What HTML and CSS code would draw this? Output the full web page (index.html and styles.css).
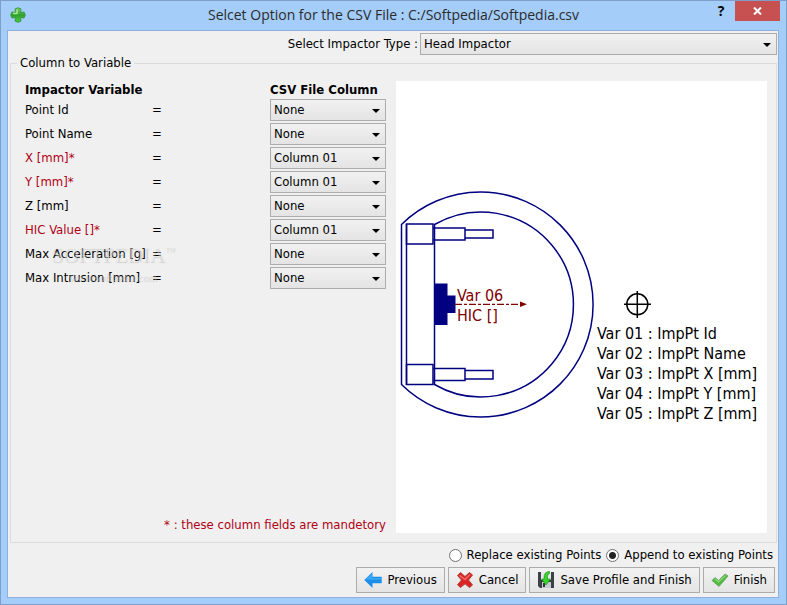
FILE: index.html
```html
<!DOCTYPE html>
<html lang="en">
<head>
<meta charset="utf-8">
<title>Selcet Option for the CSV File</title>
<link rel="stylesheet" href="styles.css">
</head>
<body>
<div class="window">
  <header class="titlebar">
    <svg class="app-icon" width="16" height="16" viewBox="0 0 16 16" aria-hidden="true">
      <defs><linearGradient id="plus" x1="0" y1="0" x2="0" y2="1"><stop offset="0" stop-color="#7fd866"/><stop offset=".5" stop-color="#2f9f2c"/><stop offset="1" stop-color="#4cd03a"/></linearGradient></defs>
      <path d="M5 2Q8 -.5 11 2L10.500 5.500L14 5Q16.500 8 14 11L10.500 10.500L11 14Q8 16.500 5 14L5.500 10.500L2 11Q-.5 8 2 5L5.500 5.500Z" fill="url(#plus)" stroke="#3a9a48"/>
      <path d="M7 2.500V6.500H3" fill="none" stroke="#a8e890" stroke-width="1.500"/>
    </svg>
    <h1 class="title">Selcet Option for the CSV File : C:/Softpedia/Softpedia.csv</h1>
    <button class="help" type="button">?</button>
    <button class="close" type="button" aria-label="Close">
      <svg width="9" height="8" viewBox="0 0 9 8"><path d="M1 .5l7 7M8 .5l-7 7" stroke="#fff" stroke-width="2"/></svg>
    </button>
  </header>

  <form class="client">
    <div class="type-row">
      <label for="type">Select Impactor Type :</label>
      <select id="type" class="combo type-combo"><option>Head Impactor</option></select>
    </div>

    <fieldset class="group">
      <legend>Column to Variable</legend>
      <div class="group-body">
        <div class="mapping">
          <table class="map-table">
            <thead><tr><th class="name">Impactor Variable</th><th></th><th class="column">CSV File Column</th></tr></thead>
            <tbody>
              <tr><td><label for="v1">Point Id</label></td><td>=</td><td><select id="v1" class="combo"><option>None</option></select></td></tr>
              <tr><td><label for="v2">Point Name</label></td><td>=</td><td><select id="v2" class="combo"><option>None</option></select></td></tr>
              <tr><td><label class="required" for="v3">X [mm]*</label></td><td>=</td><td><select id="v3" class="combo"><option>Column 01</option></select></td></tr>
              <tr><td><label class="required" for="v4">Y [mm]*</label></td><td>=</td><td><select id="v4" class="combo"><option>Column 01</option></select></td></tr>
              <tr><td><label for="v5">Z [mm]</label></td><td>=</td><td><select id="v5" class="combo"><option>None</option></select></td></tr>
              <tr><td><label class="required" for="v6">HIC Value []*</label></td><td>=</td><td><select id="v6" class="combo"><option>Column 01</option></select></td></tr>
              <tr><td><label for="v7">Max Acceleration [g]</label></td><td>=</td><td><select id="v7" class="combo"><option>None</option></select></td></tr>
              <tr><td><label for="v8">Max Intrusion [mm]</label></td><td>=</td><td><select id="v8" class="combo"><option>None</option></select></td></tr>
            </tbody>
          </table>
          <div class="watermark"><span class="mark-name">SOFTPEDIA<sup>™</sup></span><span class="mark-url">www.softpedia.com</span></div>
          <p class="note required">* : these column fields are mandetory</p>
        </div>

        <div class="preview">
          <svg class="drawing" viewBox="396 81 371 452" preserveAspectRatio="xMinYMin meet">
            <g fill="none" stroke="#000080" stroke-width="1.500">
              <path d="M401.500 224.500A112.500 112.500 0 1 1 401.500 384.500Z"/>
              <path d="M434.500 224.500A92.500 92.500 0 1 1 434.500 384.500Z"/>
              <path d="M406.500 224V385"/>
              <path d="M406.500 224H433V244H406.500ZM433 228H465V240H433ZM465 230H493V238H465Z"/>
              <path d="M406.500 364.500H433V384.500H406.500ZM433 368.500H465V380.500H433ZM465 370.500H493V379H465Z"/>
            </g>
            <path d="M434 283.500H447.500V295.500H455.500V313H447.500V325H434Z" fill="#000080"/>
            <path d="M455 304.300H521" stroke="#800000" stroke-width="1.300" stroke-dasharray="7 2 3 2"/>
            <path d="M520 301.500L527 304.300L520 307Z" fill="#800000"/>
            <g class="drawing-text" fill="#800000"><text x="457" y="301">Var 06</text><text x="457" y="321">HIC []</text></g>
            <g fill="none" stroke="#000" stroke-width="1.500"><circle cx="637.300" cy="304.300" r="10.500"/><path d="M624 304.300H651M637.300 291V318"/></g>
            <g class="drawing-text">
              <text x="597" y="339">Var 01 : ImpPt Id</text>
              <text x="597" y="359">Var 02 : ImpPt Name</text>
              <text x="597" y="379">Var 03 : ImpPt X [mm]</text>
              <text x="597" y="399">Var 04 : ImpPt Y [mm]</text>
              <text x="597" y="419">Var 05 : ImpPt Z [mm]</text>
            </g>
          </svg>
        </div>
      </div>
    </fieldset>

    <div class="mode-row">
      <input type="radio" id="replace" name="mode"><label for="replace">Replace existing Points</label>
      <input type="radio" id="append" name="mode" checked><label for="append">Append to existing Points</label>
    </div>

    <div class="actions">
      <button class="btn" type="button">
        <svg width="18" height="18" viewBox="0 0 18 18" aria-hidden="true"><path d="M.3 9L8.500 1V5.800H17.700V12.200H8.500V17Z" fill="#1b8fe8"/><path d="M1.500 8.500L8 2.500V7H17V8.500Z" fill="#3aaaf6"/></svg>
        Previous</button>
      <button class="btn" type="button">
        <svg width="18" height="18" viewBox="0 0 18 18" aria-hidden="true"><path d="M1.500 4.500L4.500 1.500L9 5.500L13.500 1.500L16.500 4L12.500 9L16.500 14L13.500 16.500L9 12.800L4.500 16.500L1.500 13.800L5.500 9Z" fill="#dc2222" stroke="#b04040"/><path d="M3.500 4.300L9 8.500L14 3.500" fill="none" stroke="#ee7068" stroke-width="1.500"/></svg>
        Cancel</button>
      <button class="btn" type="button">
        <svg width="18" height="18" viewBox="0 0 18 18" aria-hidden="true"><path d="M1 1H17V17H3L1 15Z" fill="#3c4047"/><path d="M4 1H14V9H4Z" fill="#e4e7eb"/><path d="M5 11H14V17H5Z" fill="#c8ccd2"/><path d="M6 12H8V16H6Z" fill="#33373d"/><path d="M12.500 .5Q6.500 .5 7 8H4.500L9 14L13.500 8H10.500Q10 3 12.500 2.500Z" fill="#35d52c" stroke="#16851a" stroke-width=".6"/></svg>
        Save Profile and Finish</button>
      <button class="btn" type="button">
        <svg width="18" height="18" viewBox="0 0 18 18" aria-hidden="true"><path d="M1 9.500L4 6.500L7.500 9.500L14 3L17 5L8 15.500Z" fill="#4cbb3a" stroke="#7ba67a"/><path d="M4 8L7.500 11L14.500 4.500" fill="none" stroke="#86d872" stroke-width="1.500"/></svg>
        Finish</button>
    </div>
  </form>
</div>
</body>
</html>
```
FILE: styles.css
```css
* { box-sizing: border-box; }

body {
  margin: 0;
  font: 13px/16px "DejaVu Sans Condensed", "Noto Sans", sans-serif;
  color: #000;
}

button, select, input { font: inherit; color: inherit; margin: 0; }

.window {
  display: flex;
  flex-direction: column;
  min-height: 100vh;
  padding: 0 7px 6px 6px;
  border: 1px solid #7f9fc8;
  background: #a4cdfa;
}

.titlebar {
  display: flex;
  align-items: flex-start;
  height: 29px;
  margin-right: -1px;
}

.app-icon { margin: 6px 0 0 3px; }

.title {
  flex: 1;
  margin: 4px 0 0;
  padding-left: 54px;
  font: 14px/20px "Open Sans", sans-serif;
  color: #2b2b2b;
  text-align: center;
}

.help {
  width: 28px;
  height: 20px;
  padding: 0;
  border: 0;
  background: none;
  font: bold 14px/20px "Open Sans", sans-serif;
}

.close {
  display: flex;
  align-items: center;
  justify-content: center;
  width: 45px;
  height: 20px;
  padding: 0;
  border: 0;
  background: #c75050;
}

.client {
  display: flex;
  flex: 1;
  flex-direction: column;
  padding: 2px 1px 4px 2px;
  border: 1px solid #8fb0dc;
  background: #f0f0f0;
}

.type-row {
  display: flex;
  align-items: center;
  justify-content: flex-end;
  gap: 2px;
}

.combo {
  display: block;
  width: 116px;
  height: 22px;
  padding: 0 20px 0 3px;
  border: 1px solid #acacac;
  border-radius: 0;
  appearance: none;
  background:
    url("data:image/svg+xml,%3Csvg xmlns='http://www.w3.org/2000/svg' width='8' height='4'%3E%3Cpath d='M0 0h8L4 4z'/%3E%3C/svg%3E") no-repeat right 5px top 9px,
    linear-gradient(#f1f1f1, #e4e4e4);
}

.type-combo { width: 357px; }

.group {
  display: flex;
  flex: 1;
  flex-direction: column;
  min-width: 0;
  margin: 0;
  padding: 10px 9px 9px 14px;
  border: 1px solid #dcdcdc;
}

.group legend { margin-left: -8px; padding: 0 3px; }

.group-body {
  display: flex;
  gap: 10px;
  height: 100%;
}

.mapping {
  position: relative;
  display: flex;
  flex: 0 0 361px;
  flex-direction: column;
}

.map-table { width: 100%; border-collapse: collapse; }
.map-table th { height: 17px; padding: 0; text-align: left; }
.map-table td { height: 24px; padding: 0; }
.map-table .name { width: 127px; }
.map-table .column { width: 116px; }

.required { color: #b00014; }

.note { margin: auto 0 0; text-align: right; }

.watermark {
  position: absolute;
  top: 162px;
  left: 22px;
  width: 132px;
  color: rgba(240, 240, 240, 0.4);
  font-family: "Liberation Serif", serif;
  text-align: center;
  text-shadow: 1px 1px 1px rgba(150, 150, 150, 0.35);
  pointer-events: none;
}

.mark-name { display: block; font-size: 21px; line-height: 24px; }
.mark-name sup { font-size: 10px; line-height: 0; }
.mark-url { display: block; font-size: 11px; line-height: 20px; }

.preview { flex: 1; min-width: 0; background: #fff; }
.drawing { display: block; width: 100%; }
.drawing-text { font-size: 16px; }

.mode-row {
  display: flex;
  align-items: center;
  justify-content: flex-end;
  gap: 5px;
  padding: 4px 4px 4px 0;
}

.mode-row input {
  width: 13px;
  height: 13px;
  border: 1px solid #707070;
  border-radius: 50%;
  appearance: none;
  background: #fff;
}

.mode-row input:checked { background: radial-gradient(circle, #222 3px, #fff 4px); }

.actions {
  display: flex;
  justify-content: flex-end;
  gap: 3px;
  padding-right: 2px;
}

.btn {
  display: flex;
  align-items: center;
  gap: 5px;
  height: 26px;
  padding: 0 7px;
  border: 1px solid #acacac;
  background: linear-gradient(#f2f2f2, #e4e4e4);
}
```
